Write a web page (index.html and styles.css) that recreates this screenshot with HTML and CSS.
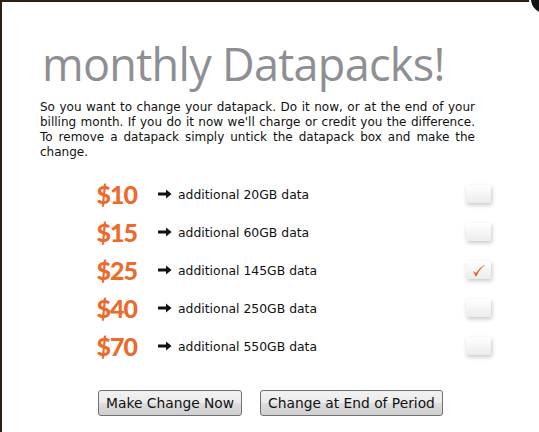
FILE: index.html
```html
<!DOCTYPE html>
<html>
<head>
<meta charset="utf-8">
<link rel="stylesheet" href="styles.css">
</head>
<body>
<div class="panel">
  <span class="close"></span>
  <h1 class="title">monthly Datapacks!</h1>
  <p class="intro">So you want to change your datapack. Do it now, or at the end of your billing month. If you do it now we'll charge or credit you the difference. To remove a datapack simply untick the datapack box and make the change.</p>
  <div class="packs">
    <div class="row"><span class="price">$10</span><span class="desc"><svg class="arrow" viewBox="0 0 14 10"><path d="M0 3.6h8V0.4L13.6 5 8 9.6V6.4H0z"/></svg>additional 20GB data</span><span class="box"></span></div>
    <div class="row"><span class="price">$15</span><span class="desc"><svg class="arrow" viewBox="0 0 14 10"><path d="M0 3.6h8V0.4L13.6 5 8 9.6V6.4H0z"/></svg>additional 60GB data</span><span class="box"></span></div>
    <div class="row"><span class="price">$25</span><span class="desc"><svg class="arrow" viewBox="0 0 14 10"><path d="M0 3.6h8V0.4L13.6 5 8 9.6V6.4H0z"/></svg>additional 145GB data</span><span class="box"><svg class="check" viewBox="0 0 12 12"><path d="M0.8 6.6 Q2.4 6.9 3.6 8.4 Q6.6 3.6 11.6 0.8 L11.8 1.2 Q7 4.6 4.2 11.2 L3.2 11.2 Q2.3 8.4 0.8 6.6z"/></svg></span></div>
    <div class="row"><span class="price">$40</span><span class="desc"><svg class="arrow" viewBox="0 0 14 10"><path d="M0 3.6h8V0.4L13.6 5 8 9.6V6.4H0z"/></svg>additional 250GB data</span><span class="box"></span></div>
    <div class="row"><span class="price">$70</span><span class="desc"><svg class="arrow" viewBox="0 0 14 10"><path d="M0 3.6h8V0.4L13.6 5 8 9.6V6.4H0z"/></svg>additional 550GB data</span><span class="box"></span></div>
  </div>
  <div class="actions">
    <button class="btn">Make Change Now</button>
    <button class="btn">Change at End of Period</button>
  </div>
</div>
</body>
</html>
```
FILE: styles.css
```css
html, body { margin: 0; padding: 0; background: #2b1f16; }
body { width: 539px; height: 432px; overflow: hidden; }
.panel {
  position: relative;
  box-sizing: border-box;
  width: 539px;
  height: 432px;
  margin-top: 2px;
  margin-left: 2px;
  background: #fff;
  padding: 0 0 0 38px;
}
.close {
  position: absolute;
  right: -20px;
  top: -19px;
  width: 28px;
  height: 28px;
  border-radius: 50%;
  background: #111;
  border: 2px solid #fff;
}
.title {
  margin: 0;
  padding-top: 36px;
  padding-left: 2px;
  font-family: "Open Sans", sans-serif;
  font-weight: 400;
  font-size: 45px;
  line-height: 52px;
  color: #8e8f93;
  letter-spacing: -0.7px;
}
.intro {
  margin: 10px 0 0 0;
  width: 435px;
  font-family: "DejaVu Sans", Verdana, sans-serif;
  font-size: 12px;
  line-height: 15px;
  color: #111;
  text-align: justify;
}
.packs { margin-top: 15px; }
.row {
  display: grid;
  grid-template-columns: 97px 1fr 25px;
  column-gap: 21px;
  align-items: center;
  height: 38px;
  width: 451px;
}
.price {
  text-align: right;
  font-family: Lato, sans-serif;
  font-weight: 900;
  font-size: 25px;
  letter-spacing: -1px;
  color: #ec6a2b;
}
.desc {
  display: flex;
  align-items: center;
  font-family: "DejaVu Sans", Verdana, sans-serif;
  font-size: 12.4px;
  color: #111;
}
.arrow { width: 14px; height: 10px; margin-right: 6px; fill: #111; }
.box {
  width: 25px;
  height: 18px;
  background: linear-gradient(#ffffff, #ececec);
  box-shadow: 1px 2px 4px rgba(0,0,0,0.22);
  border-radius: 1px;
  display: flex;
  align-items: center;
  justify-content: center;
}
.check { width: 13px; height: 13px; fill: #e4612a; }
.actions {
  display: flex;
  justify-content: center;
  gap: 18px;
  margin-top: 25px;
  margin-left: -40px;
}
.btn {
  height: 26px;
  padding: 0 7px;
  font-family: "DejaVu Sans", Verdana, sans-serif;
  font-size: 13.8px;
  color: #111;
  background: linear-gradient(#f2f2f2, #ebebeb 50%, #dddddd 51%, #cfcfcf);
  border: 1px solid #707070;
  border-radius: 3px;
}
```
